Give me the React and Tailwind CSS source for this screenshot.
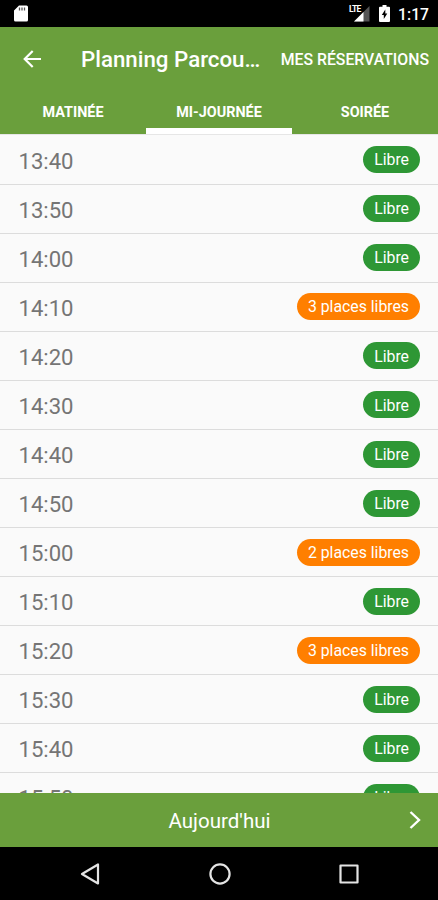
import React from 'react';

const slots = [
  { time: '13:40', label: 'Libre' },
  { time: '13:50', label: 'Libre' },
  { time: '14:00', label: 'Libre' },
  { time: '14:10', label: '3 places libres', partial: true },
  { time: '14:20', label: 'Libre' },
  { time: '14:30', label: 'Libre' },
  { time: '14:40', label: 'Libre' },
  { time: '14:50', label: 'Libre' },
  { time: '15:00', label: '2 places libres', partial: true },
  { time: '15:10', label: 'Libre' },
  { time: '15:20', label: '3 places libres', partial: true },
  { time: '15:30', label: 'Libre' },
  { time: '15:40', label: 'Libre' },
  { time: '15:50', label: 'Libre' },
];

function StatusBar() {
  return (
    <div className="flex h-[27px] shrink-0 items-center bg-black pl-[14px] pr-[9px] text-white">
      <svg className="h-[17px] w-[14px]" viewBox="0 0 14 17">
        <path d="M5 .5h7.500a1.500 1.500 0 0 1 1.500 1.500v13a1.500 1.500 0 0 1-1.500 1.500h-11A1.500 1.500 0 0 1 0 15V5.500z" fill="#fff" />
        <path d="M5.500 2.500v3M8 2.500v3M10.500 2.500v3" stroke="#555" strokeWidth="1.300" />
      </svg>
      <div className="relative ml-auto h-[17px] w-[21px]">
        <svg className="h-[17px] w-[21px]" viewBox="0 0 21 17">
          <path d="M20.500 1v15.500H5z" fill="#555" />
          <path d="M14.500 7v9.500H5z" fill="#fff" />
        </svg>
        <span className="absolute left-0 top-0 text-[8.500px] font-bold leading-[8px] tracking-[-0.8px]">LTE</span>
      </div>
      <svg className="ml-[9px] h-[17px] w-[11px]" viewBox="0 0 11 17">
        <path d="M3.500 0h4v1.800H10a1 1 0 0 1 1 1V16a1 1 0 0 1-1 1H1a1 1 0 0 1-1-1V2.800a1 1 0 0 1 1-1h2.500z" fill="#fff" />
        <path d="M6.300 4.500 2.800 10h2v4l3.500-5.500h-2z" fill="#000" />
      </svg>
      <span className="ml-[8px] mt-[2px] text-[15.700px] font-medium leading-5">1:17</span>
    </div>
  );
}

function Header() {
  return (
    <header className="flex h-[107px] shrink-0 flex-col bg-[#6a9f3c] text-white">
      <div className="flex h-[65px] shrink-0 items-center pl-[23px] pr-[9px]">
        <svg className="h-[18px] w-[18px] -translate-y-px" viewBox="0 0 18 18" fill="none" stroke="currentColor" strokeWidth="2.200">
          <path d="M18 9H1.800M9.700 1 1.700 9l8 8" />
        </svg>
        <span className="ml-[40px] pt-px text-[22.300px] font-medium">
          Planning Parcou<span className="tracking-[0.2px]">…</span>
        </span>
        <span className="ml-auto text-[15.800px] font-medium">MES RÉSERVATIONS</span>
      </div>
      <nav className="grid grow grid-cols-3 text-center text-[14.400px] font-bold leading-[30px]">
        <span className="pt-[6px]">MATINÉE</span>
        <span className="border-b-[6px] border-white pt-[6px]">MI-JOURNÉE</span>
        <span className="pt-[6px]">SOIRÉE</span>
      </nav>
    </header>
  );
}

function SlotRow({ slot }) {
  return (
    <li className="flex h-[49.070px] shrink-0 items-center justify-between border-b border-[#dcdcdc] pl-[18.500px] pr-[18px]">
      <span className="pt-[2px] text-[22.100px] leading-6 text-[#757575]">{slot.time}</span>
      <span
        className={`flex h-[27px] items-center rounded-full px-[11px] pt-px text-[15.800px] text-white ${
          slot.partial ? 'bg-[#ff7f00]' : 'bg-[#2e9735]'
        }`}
      >
        {slot.label}
      </span>
    </li>
  );
}

function NavigationBar() {
  return (
    <div className="flex h-[53px] shrink-0 items-center justify-between bg-black pl-[80px] pr-[79px]">
      <svg className="h-[22px] w-5" viewBox="0 0 20 22" fill="none" stroke="#e4e4e4" strokeWidth="2.200" strokeLinejoin="round">
        <path d="M18 1.500v19L2 11z" />
      </svg>
      <svg className="h-[22px] w-[22px]" viewBox="0 0 22 22" fill="none" stroke="#e4e4e4" strokeWidth="2.200">
        <circle cx="11" cy="11" r="9.600" />
      </svg>
      <svg className="h-5 w-5" viewBox="0 0 20 20" fill="none" stroke="#e4e4e4" strokeWidth="2.200" strokeLinejoin="round">
        <path d="M1.500 1.500h17v17h-17z" />
      </svg>
    </div>
  );
}

function App() {
  return (
    <div className="flex h-[900px] w-[438px] flex-col overflow-hidden bg-[#fafafa] font-['Roboto',sans-serif]">
      <StatusBar />
      <Header />
      <ul className="flex min-h-0 grow flex-col overflow-hidden border-t border-[#e6e6e6] pt-[0.6px]">
        {slots.map((slot) => (
          <SlotRow key={slot.time} slot={slot} />
        ))}
      </ul>
      <div className="grid h-[54px] shrink-0 grid-cols-[1fr_auto_1fr] items-center bg-[#6a9f3c] pr-[17px] text-[20.500px] text-white">
        <span className="col-start-2 pl-[18px] pt-[2px]">Aujourd'hui</span>
        <svg className="h-[18px] w-3 justify-self-end" viewBox="0 0 12 18" fill="none" stroke="currentColor" strokeWidth="2.400">
          <path d="m1.500 1 8.500 8-8.500 8" />
        </svg>
      </div>
      <NavigationBar />
    </div>
  );
}

export default App;
